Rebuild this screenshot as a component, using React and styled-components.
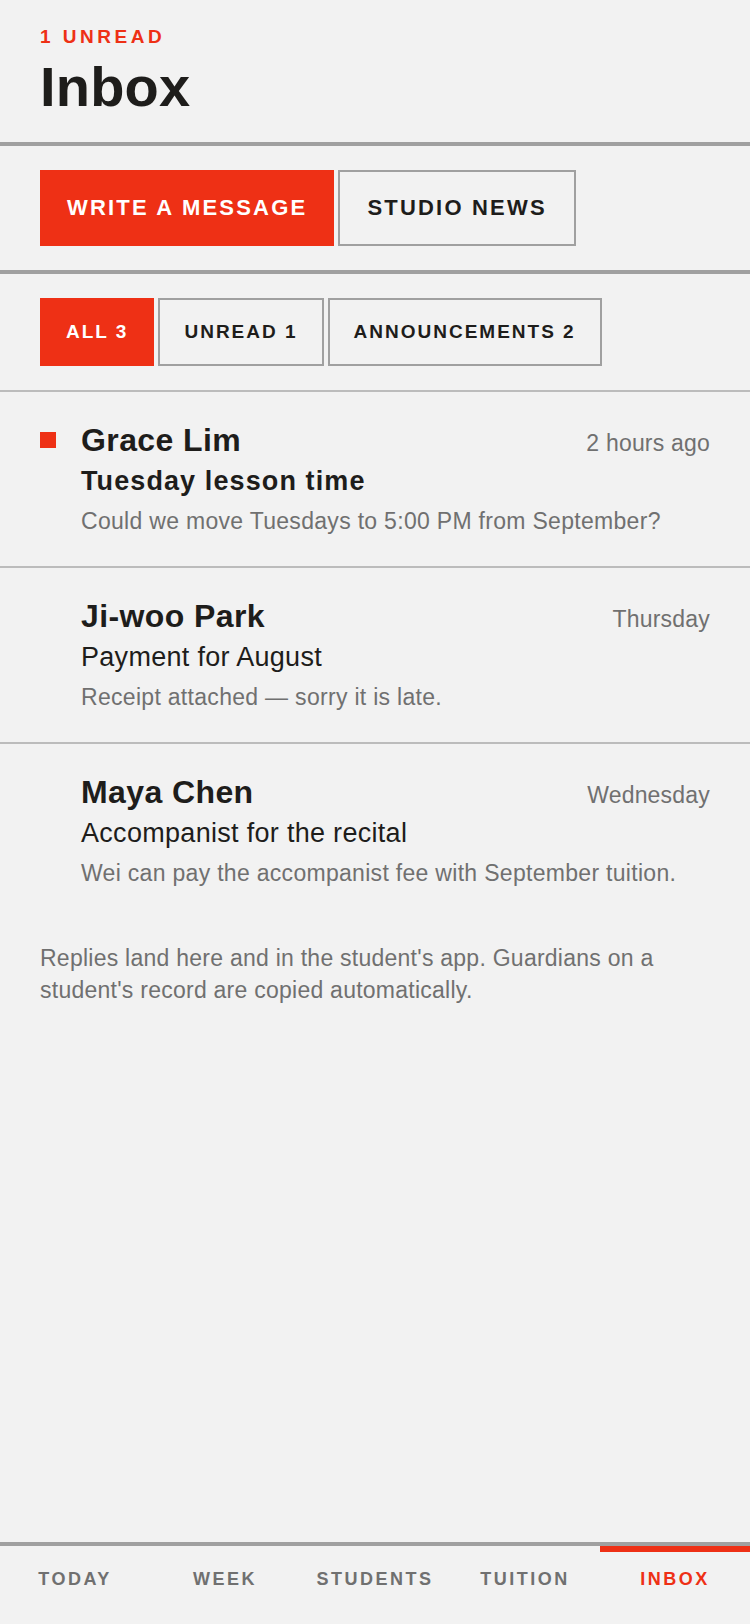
import styled, { createGlobalStyle } from "styled-components";

const RED = "#ee3015";
const INK = "#1e1d1b";
const MUTED = "#707070";
const RULE = "#a0a0a0";

const GlobalStyle = createGlobalStyle`
  * { box-sizing: border-box; }
  html, body { margin: 0; padding: 0; background: #f2f2f2; }
  body {
    font-family: "Liberation Sans", Arial, sans-serif;
    color: ${INK};
  }
  button { font-family: inherit; }
`;

const messages = [
  {
    name: "Grace Lim",
    time: "2 hours ago",
    subject: "Tuesday lesson time",
    preview: "Could we move Tuesdays to 5:00 PM from September?",
    unread: true,
  },
  {
    name: "Ji-woo Park",
    time: "Thursday",
    subject: "Payment for August",
    preview: "Receipt attached — sorry it is late.",
  },
  {
    name: "Maya Chen",
    time: "Wednesday",
    subject: "Accompanist for the recital",
    preview: "Wei can pay the accompanist fee with September tuition.",
  },
];

const filters = [
  { label: "All 3", active: true },
  { label: "Unread 1" },
  { label: "Announcements 2" },
];

const tabs = ["Today", "Week", "Students", "Tuition", "Inbox"];

const App = () => {
  return (
    <Page>
      <GlobalStyle />
      <Main>
        <Header>
          <Eyebrow>1 Unread</Eyebrow>
          <Title>Inbox</Title>
        </Header>

        <Actions>
          <ActionButton $primary>Write a message</ActionButton>
          <ActionButton>Studio news</ActionButton>
        </Actions>

        <Filters>
          {filters.map((f) => (
            <FilterButton key={f.label} $active={f.active}>{f.label}</FilterButton>
          ))}
        </Filters>

        <List>
          {messages.map((m, i) => (
            <Row key={m.name} $last={i === messages.length - 1}>
              <DotCell>{m.unread && <Dot />}</DotCell>
              <div>
                <TopLine>
                  <Name>{m.name}</Name>
                  <Time>{m.time}</Time>
                </TopLine>
                <Subject $unread={m.unread}>{m.subject}</Subject>
                <Preview>{m.preview}</Preview>
              </div>
            </Row>
          ))}
        </List>

        <Note>
          Replies land here and in the student's app. Guardians on a student's record are copied automatically.
        </Note>
      </Main>

      <Nav>
        {tabs.map((t) => (
          <Tab key={t} $active={t === "Inbox"}>{t}</Tab>
        ))}
      </Nav>
    </Page>
  );
};

export default App;


const Page = styled.div`
  min-height: 100vh;
  display: flex;
  flex-direction: column;
`

const Main = styled.main`
  flex: 1;
`

const Header = styled.header`
  padding: 27px 40px 27px;
  border-bottom: 4px solid ${RULE};
`

const Eyebrow = styled.div`
  font-size: 19px;
  line-height: 20px;
  font-weight: 700;
  letter-spacing: 3.5px;
  text-transform: uppercase;
  color: ${RED};
`

const Title = styled.h1`
  margin: 12px 0 0;
  font-size: 56px;
  line-height: 56px;
  font-weight: 700;
  letter-spacing: 0.2px;
  color: ${INK};
`

const Actions = styled.div`
  display: flex;
  gap: 4px;
  padding: 24px 40px;
  border-bottom: 4px solid ${RULE};
`

const ActionButton = styled.button`
  height: 76px;
  padding: 0 ${(p) => (p.$primary ? "25px" : "27px")};
  border: 2px solid ${(p) => (p.$primary ? RED : RULE)};
  background: ${(p) => (p.$primary ? RED : "transparent")};
  color: ${(p) => (p.$primary ? "#fff" : INK)};
  font-size: 22px;
  font-weight: 700;
  letter-spacing: 2.2px;
  text-transform: uppercase;
`

const Filters = styled.div`
  display: flex;
  gap: 4px;
  padding: 24px 40px;
  border-bottom: 2px solid #bcbcbc;
`

const FilterButton = styled.button`
  height: 68px;
  padding: 0 24px;
  border: 2px solid ${(p) => (p.$active ? RED : RULE)};
  background: ${(p) => (p.$active ? RED : "transparent")};
  color: ${(p) => (p.$active ? "#fff" : INK)};
  font-size: 19px;
  font-weight: 700;
  letter-spacing: 2px;
  text-transform: uppercase;
`

const List = styled.div``

const Row = styled.div`
  display: grid;
  grid-template-columns: 16px 1fr;
  column-gap: 25px;
  padding: 30px 40px;
  border-bottom: ${(p) => (p.$last ? "none" : "2px solid #bcbcbc")};
`

const DotCell = styled.div`
  height: 36px;
  display: flex;
  align-items: center;
`

const Dot = styled.span`
  width: 16px;
  height: 16px;
  background: ${RED};
`

const TopLine = styled.div`
  display: flex;
  justify-content: space-between;
  align-items: baseline;
  height: 36px;
`

const Name = styled.div`
  font-size: 32px;
  line-height: 36px;
  font-weight: 700;
  letter-spacing: 0.4px;
`

const Time = styled.div`
  font-size: 23px;
  line-height: 28px;
  letter-spacing: 0.2px;
  color: ${MUTED};
`

const Subject = styled.div`
  margin-top: 7px;
  font-size: 27px;
  line-height: 32px;
  font-weight: ${(p) => (p.$unread ? 700 : 400)};
  letter-spacing: ${(p) => (p.$unread ? "1.1px" : "0.3px")};
`

const Preview = styled.div`
  margin-top: 9px;
  font-size: 23px;
  line-height: 30px;
  letter-spacing: 0.3px;
  color: ${MUTED};
`

const Note = styled.p`
  margin: 24px 0 0;
  padding: 0 40px;
  font-size: 23px;
  line-height: 32px;
  letter-spacing: 0.25px;
  color: ${MUTED};
`

const Nav = styled.nav`
  display: grid;
  grid-template-columns: repeat(5, 1fr);
  border-top: 4px solid ${RULE};
`

const Tab = styled.div`
  border-top: 6px solid ${(p) => (p.$active ? RED : "transparent")};
  padding: 17px 0 35px;
  text-align: center;
  font-size: 18px;
  line-height: 20px;
  font-weight: 700;
  letter-spacing: 2.5px;
  text-transform: uppercase;
  color: ${(p) => (p.$active ? RED : MUTED)};
`
